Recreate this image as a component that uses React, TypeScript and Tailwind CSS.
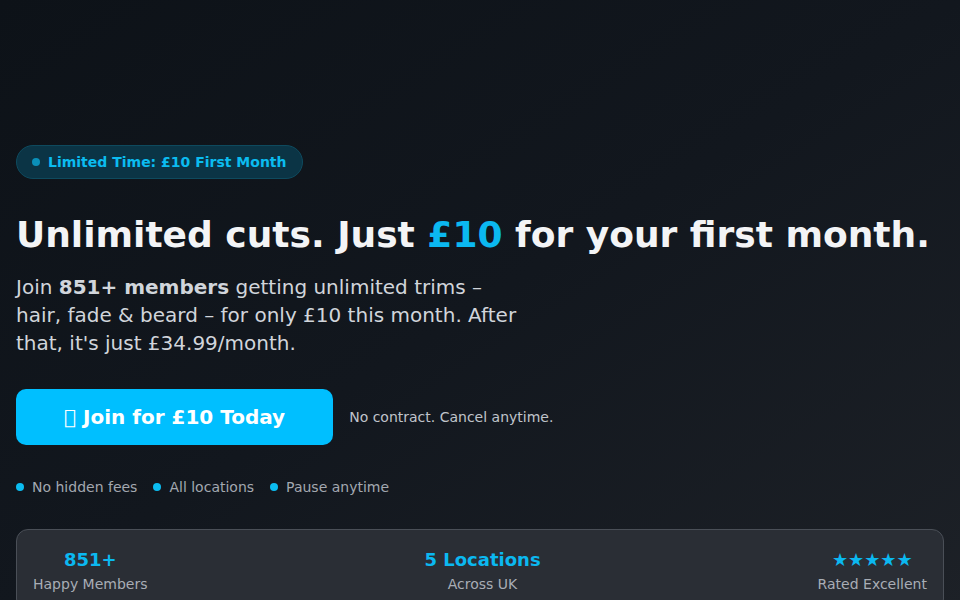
import React from "react";

export default function App() {
  return (
    <div
      className="min-h-screen w-full bg-gradient-to-br from-[#0d1218] via-[#12171e] to-[#1d2127] text-white overflow-hidden"
      style={{ fontFamily: '"DejaVu Sans", sans-serif' }}
    >
      <div className="px-4 pt-[145px]">
        <div className="inline-flex items-center gap-2 rounded-full border border-[#0e4a5e] bg-[#0b3445] px-[15px] py-1.5">
          <span className="h-2 w-2 rounded-full bg-[#0a8fb8]" />
          <span className="text-sm font-bold leading-5 text-[#0bbcf0]">Limited Time: £10 First Month</span>
        </div>

        <h1 className="mt-[33px] text-4xl font-bold leading-[45px] tracking-normal text-[#f3f4f6]">
          Unlimited cuts. Just <span className="text-[#0bb8f0]">£10</span> for your first month.
        </h1>

        <p className="mt-4 max-w-[512px] text-xl leading-7 text-[#d1d5db]">
          Join <strong className="font-bold">851+ members</strong> getting unlimited trims – hair, fade &amp; beard – for only £10 this month. After that, it's just £34.99/month.
        </p>

        <div className="mt-8 flex items-center gap-4">
          <button className="h-14 rounded-[10px] bg-[#00bfff] px-12 text-xl font-bold text-white">
            {"\u{10FFFD}"} Join for £10 Today
          </button>
          <span className="text-sm text-[#c0c4cb]">No contract. Cancel anytime.</span>
        </div>

        <div className="mt-[32px] flex items-center gap-4 text-sm text-[#a3a8b0]">
          <div className="flex items-center gap-2">
            <span className="h-2 w-2 rounded-full bg-[#0bbcf0]" />
            No hidden fees
          </div>
          <div className="flex items-center gap-2">
            <span className="h-2 w-2 rounded-full bg-[#0bbcf0]" />
            All locations
          </div>
          <div className="flex items-center gap-2">
            <span className="h-2 w-2 rounded-full bg-[#0bbcf0]" />
            Pause anytime
          </div>
        </div>

        <div className="mt-[32px] flex items-start justify-between rounded-xl border border-[#4a4f57] bg-[#2a2e35] px-4 pt-4 pb-4">
          <div className="flex flex-col items-center">
            <span className="text-lg font-bold leading-7 text-[#0bb8f0]">851+</span>
            <span className="text-sm leading-5 text-[#a8adb5]">Happy Members</span>
          </div>
          <div className="flex flex-col items-center">
            <span className="text-lg font-bold leading-7 text-[#0bb8f0]">5 Locations</span>
            <span className="text-sm leading-5 text-[#a8adb5]">Across UK</span>
          </div>
          <div className="flex flex-col items-center">
            <span className="text-lg leading-7 text-[#0bb8f0]">★★★★★</span>
            <span className="text-sm leading-5 text-[#a8adb5]">Rated Excellent</span>
          </div>
        </div>
      </div>
    </div>
  );
}
